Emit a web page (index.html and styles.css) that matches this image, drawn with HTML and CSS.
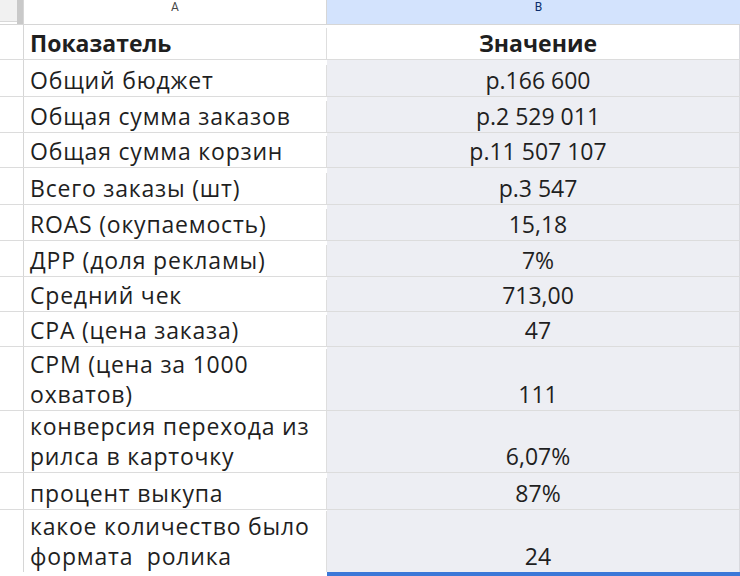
FILE: index.html
```html
<!DOCTYPE html>
<html lang="ru">
<head>
<meta charset="utf-8">
<link rel="stylesheet" href="styles.css">
</head>
<body>
<div class="sheet">
  <div class="row head">
    <div class="rh corner"><span class="corner-fill"></span><span class="freeze"></span></div>
    <div class="ch">A</div>
    <div class="ch chb">B</div>
  </div>
  <div class="row h35">
    <div class="rh"></div>
    <div class="ca bold">Показатель</div>
    <div class="cb white bold">Значение</div>
  </div>
  <div class="row h37"><div class="rh"></div><div class="ca">Общий бюджет</div><div class="cb">р.166 600</div></div>
  <div class="row h36"><div class="rh"></div><div class="ca">Общая сумма заказов</div><div class="cb">р.2 529 011</div></div>
  <div class="row h35"><div class="rh"></div><div class="ca">Общая сумма корзин</div><div class="cb">р.11 507 107</div></div>
  <div class="row h37"><div class="rh"></div><div class="ca">Всего заказы (шт)</div><div class="cb">р.3 547</div></div>
  <div class="row h36"><div class="rh"></div><div class="ca">ROAS (окупаемость)</div><div class="cb">15,18</div></div>
  <div class="row h36"><div class="rh"></div><div class="ca">ДРР (доля рекламы)</div><div class="cb">7%</div></div>
  <div class="row h35"><div class="rh"></div><div class="ca">Средний чек</div><div class="cb">713,00</div></div>
  <div class="row h35"><div class="rh"></div><div class="ca">CPA (цена заказа)</div><div class="cb">47</div></div>
  <div class="row h64"><div class="rh"></div><div class="ca">CPM (цена за 1000<br>охватов)</div><div class="cb">111</div></div>
  <div class="row h62"><div class="rh"></div><div class="ca">конверсия перехода из<br>рилса в карточку</div><div class="cb">6,07%</div></div>
  <div class="row h37"><div class="rh"></div><div class="ca">процент выкупа</div><div class="cb">87%</div></div>
  <div class="row h62 last"><div class="rh"></div><div class="ca">какое количество было<br>формата&nbsp; ролика</div><div class="cb">24</div></div>
  <div class="selbar"><span class="selbar-a"></span><span class="selbar-b"></span></div>
</div>
</body>
</html>
```

FILE: styles.css
```css
html, body {
  margin: 0;
  padding: 0;
  background: #ffffff;
}
body {
  width: 740px;
  height: 576px;
  overflow: hidden;
  font-family: "Open Sans", "DejaVu Sans", sans-serif;
  color: #1f1f1f;
}
.sheet {
  display: flex;
  flex-direction: column;
}
.row {
  display: grid;
  grid-template-columns: 24px 303px 413px;
  border-bottom: 1px solid #dcdcdc;
  box-sizing: border-box;
}
.row.last { border-bottom: none; }
.head { height: 25px; border-bottom: 1px solid #d6d6d6; }
.h35 { height: 35px; }
.h36 { height: 36px; }
.h37 { height: 37px; }
.h62 { height: 62px; }
.h64 { height: 64px; }

.rh {
  border-right: 1px solid #d6d6d6;
  background: #ffffff;
}
.corner {
  display: flex;
  background: #ffffff;
}
.corner-fill {
  width: 17px;
  height: 21px;
  background: #f1f1f1;
  border-bottom: 1px solid #d8d8d8;
}
.freeze {
  width: 6px;
  background: #c9c9c9;
}
.ch {
  display: flex;
  justify-content: center;
  align-items: flex-start;
  font-family: "Roboto", "Liberation Sans", sans-serif;
  font-size: 12px;
  line-height: 15px;
  color: #444746;
  border-right: 1px solid #d6d6d6;
}
.chb {
  background: #d3e3fd;
  color: #0b2d6b;
  border-right: none;
  padding-left: 10px;
}
.ca, .cb {
  font-size: 23px;
  line-height: 30px;
  display: flex;
  align-items: flex-end;
  padding-bottom: 1px;
  box-sizing: border-box;
  white-space: nowrap;
  overflow: hidden;
}
.ca {
  padding-left: 6px;
  border-right: 1px solid #dedede;
  display: block;
  align-self: end;
  letter-spacing: 0.8px;
}
.ca.bold { letter-spacing: 0; }
.cb {
  justify-content: center;
  padding-left: 10px;
  background: #edeef3;
  border-right: 1px solid #d9d9de;
}
.cb.white { background: #ffffff; }
.bold { font-weight: 700; }
.selbar {
  display: grid;
  grid-template-columns: 327px 413px;
  height: 4px;
}
.selbar-a { background: #ffffff; }
.selbar-b { background: #3b78d8; }
```
